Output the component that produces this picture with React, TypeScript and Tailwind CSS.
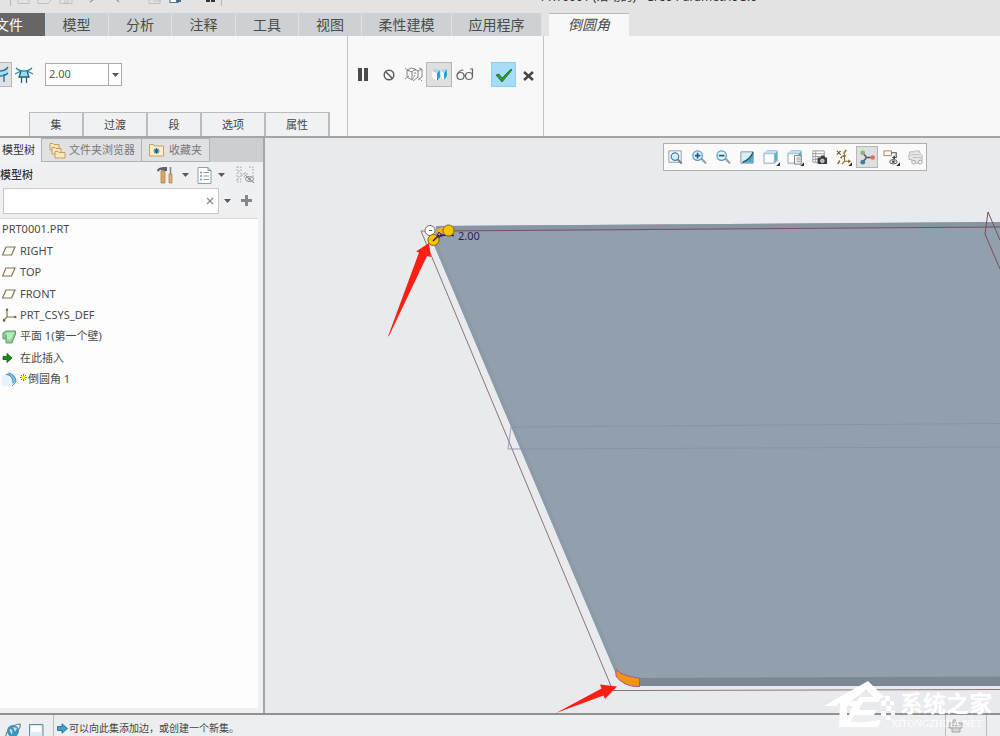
import { useState, type ReactNode } from "react";
import clsx from "clsx";

const ribbonTabs = [
  { label: "模型", width: "w-[64px]" },
  { label: "分析", width: "w-[63px]" },
  { label: "注释", width: "w-[64px]" },
  { label: "工具", width: "w-[63px]" },
  { label: "视图", width: "w-[63px]" },
  { label: "柔性建模", width: "w-[90px]" },
  { label: "应用程序", width: "w-[90px]" },
];

const optionTabs = [
  { label: "集", width: "w-[55px]" },
  { label: "过渡", width: "w-[64px]" },
  { label: "段", width: "w-[54px]" },
  { label: "选项", width: "w-[64px]" },
  { label: "属性", width: "w-[64px]" },
];

const Caret = () => (
  <svg width="7" height="4" viewBox="0 0 7 4">
    <path d="M0 0h7L3.5 4z" fill="#5a5a5a" />
  </svg>
);

const PlaneIcon = () => (
  <svg width="14" height="10" viewBox="0 0 14 10" fill="#fffef6" stroke="#857253" strokeWidth="1.2">
    <path d="M4 1h9l-3.500 8h-9z" />
  </svg>
);

const CsysIcon = () => (
  <svg width="16" height="16" viewBox="0 0 16 16" fill="none" stroke="#857253" strokeWidth="1.2">
    <path d="M5 2v8h9M5 10l-4 4" />
    <path d="M3.500 3.500L5 1l1.500 2.500zM12.500 8.500L15 10l-2.500 1.500zM1 11.500v3h3" fill="#6b4d3a" stroke="none" />
  </svg>
);

const WallIcon = () => (
  <svg width="14" height="14" viewBox="0 0 14 14">
    <path d="M4 1h9.500v3L10 13H4V9H1V3z" fill="#8fd39a" stroke="#5b9a68" strokeWidth="1" />
    <path d="M4.500 2.500H12L9 9.500H5z" fill="#b6ebbc" />
    <path d="M4 5v4" stroke="#5b9a68" />
  </svg>
);

const InsertIcon = () => (
  <svg width="11" height="12" viewBox="0 0 11 12">
    <path d="M1 4.500h4V1.500L10 6l-5 4.500v-3H1z" fill="#1d8a1d" stroke="#0d560d" strokeWidth=".8" />
  </svg>
);

const RoundIcon = () => (
  <svg width="15" height="15" viewBox="0 0 15 15">
    <path d="M0 3l6-2c5 1 8 4 8 9l-4 4H0z" fill="#e8f4fb" />
    <path d="M4 2.500c4 0 7 3 7 9l3-2C14 5 11 2 6.500 1z" fill="#7cc4ea" />
    <path d="M4 2.500c4 0 7 3 7 9M6.500 1C11 2 14 5 14 10l-4 4" fill="none" stroke="#4b7fa1" strokeWidth=".9" />
  </svg>
);

const treeItems: { label: string; icon?: ReactNode; fresh?: boolean }[] = [
  { label: "PRT0001.PRT" },
  { label: "RIGHT", icon: <PlaneIcon /> },
  { label: "TOP", icon: <PlaneIcon /> },
  { label: "FRONT", icon: <PlaneIcon /> },
  { label: "PRT_CSYS_DEF", icon: <CsysIcon /> },
  { label: "平面 1(第一个壁)", icon: <WallIcon /> },
  { label: "在此插入", icon: <InsertIcon /> },
  { label: "倒圆角 1", icon: <RoundIcon />, fresh: true },
];

const cube = (
  <>
    <path d="M1 5l3-3h11v10l-3 3H1z" fill="#fbfdfe" stroke="#7e9cab" strokeWidth=".9" />
    <path d="M12 5l3-3v10l-3 3z" fill="#58b2d6" />
    <path d="M1 5l3-3h11l-3 3z" fill="#bde2f1" />
    <path d="M1 5h11v10" fill="none" stroke="#8fa7b3" strokeWidth=".7" />
  </>
);

const corner = <path d="M18 14v4h-4z" fill="#333" />;

const viewTools: { name: string; icon: ReactNode; active?: boolean }[] = [
  {
    name: "重新调整",
    icon: (
      <>
        <path d="M2 2h13v12H2z" fill="#fff" stroke="#8d969b" />
        <circle cx="8.500" cy="8" r="4" fill="#d4eefa" stroke="#3b83b0" strokeWidth="1.300" />
        <path d="M11.500 11l4 4.500" stroke="#7a7a7a" strokeWidth="2" />
      </>
    ),
  },
  {
    name: "放大",
    icon: (
      <>
        <path d="M11 10l5 5.500" stroke="#9a9fa2" strokeWidth="2.200" />
        <circle cx="7" cy="7" r="5" fill="#e1f4fc" stroke="#5b9bc0" strokeWidth="1.300" />
        <path d="M7 4v6M4 7h6" stroke="#1d5c8a" strokeWidth="1.800" />
      </>
    ),
  },
  {
    name: "缩小",
    icon: (
      <>
        <path d="M11 10l5 5.500" stroke="#9a9fa2" strokeWidth="2.200" />
        <circle cx="7" cy="7" r="5" fill="#e1f4fc" stroke="#5b9bc0" strokeWidth="1.300" />
        <path d="M4 7h6" stroke="#1d5c8a" strokeWidth="1.800" />
      </>
    ),
  },
  {
    name: "重画",
    icon: (
      <>
        <path d="M2 3h13v12H2z" fill="#d9eef6" stroke="#7d98a5" />
        <path d="M15 3.500v11H3C9 12 12 9 15 3.500z" fill="#54a9ca" />
        <path d="M15 3.500C13 8 9 12 4 14" fill="none" stroke="#2a5368" strokeWidth="1.500" />
      </>
    ),
  },
  { name: "显示样式", icon: <>{cube}{corner}</> },
  {
    name: "已保存方向",
    icon: (
      <>
        {cube}
        <path d="M8 7h7v9H8z" fill="#fff" stroke="#777" />
        <path d="M10 9.500h4M10 11.500h4M10 13.500h4" stroke="#777" strokeWidth=".8" />
        {corner}
      </>
    ),
  },
  {
    name: "视图管理器",
    icon: (
      <>
        <path d="M2 2h12v12H2zM2 5h12M2 8h12M2 11h8M5 2v12" fill="#fff" stroke="#9a9a9a" />
        <path d="M7 9h3l1-2h3l1 2h2v7H7z" fill="#3c3c3c" />
        <circle cx="12" cy="12.500" r="2" fill="#9fb6c2" stroke="#fff" strokeWidth=".6" />
      </>
    ),
  },
  {
    name: "基准显示过滤器",
    icon: (
      <>
        <path d="M2 2l4 4M6 2L2 6" stroke="#6f5b35" strokeWidth="1.300" />
        <path d="M12 1l-3 4M8 7l-2 3M5 12l-2 4" stroke="#8d6f2f" strokeWidth="1.600" />
        <path d="M10 7v6h5M10 13l-3 3M8.500 8L10 6l1.500 2M14 11.500l2 1.500-2 1.500" fill="none" stroke="#8d6f2f" strokeWidth="1.200" />
        {corner}
      </>
    ),
  },
  {
    name: "旋转中心",
    active: true,
    icon: (
      <>
        <path d="M4 4l4 5h6M8 9l-4 5" fill="none" stroke="#4d5a5f" strokeWidth="1.500" />
        <circle cx="4" cy="4" r="2.500" fill="#7fb77c" />
        <circle cx="14.500" cy="9" r="2.500" fill="#d97568" />
        <circle cx="4" cy="14" r="2.500" fill="#3f7d9c" />
      </>
    ),
  },
  {
    name: "注释显示",
    icon: (
      <>
        <path d="M1 2h8v5H1z" fill="#fffdf3" stroke="#9c8557" />
        <path d="M9 4h5v5h-3" stroke="#555" strokeWidth="1.200" />
        <path d="M12.500 6.500v5L9.500 9z" fill="#444" />
        <ellipse cx="11" cy="13.500" rx="4" ry="2.300" fill="#dfe5e8" stroke="#555" />
        <circle cx="11" cy="13.500" r="1.400" fill="#444" />
        {corner}
      </>
    ),
  },
  {
    name: "动画选项",
    icon: (
      <>
        <path d="M3 3h5l1-1h4l1 3 2 2v6h-3v2H9v-2H5v-2H2V6z" fill="#e6e6e6" stroke="#b4b4b4" />
        <path d="M4 6h9M6 9h9" stroke="#bdbdbd" />
        <circle cx="7" cy="14" r="2" fill="#f4f4f4" stroke="#a9a9a9" />
        <circle cx="14" cy="14" r="2" fill="#f4f4f4" stroke="#a9a9a9" />
      </>
    ),
  },
];

const TitleStrip = () => (
  <header className="flex h-3 shrink-0 items-start justify-between overflow-hidden bg-[#e3e3e3]">
    <svg width="230" height="7" viewBox="0 0 230 7" className="shrink-0" fill="none">
      <path d="M10.500 0v6M221.500 0v6" stroke="#b5b5b5" />
      <path d="M18 0v3.500h11V0M38 0v3.500h10l3-3.500M60 0v3.500h12V0M65 0v3h3V0M149 0v3.500h11V0M153 1h8" stroke="#c0c0c0" />
      <path d="M90 2l4-3M119 2l-3-3" stroke="#999" strokeWidth="1.300" />
      <path d="M170 0v2.500h8V0" stroke="#4a7d95" fill="#fff" strokeWidth="1.200" />
      <path d="M176 1h5" stroke="#1d5068" strokeWidth="1.500" />
      <path d="M206 1h4M211 1h4" stroke="#333" strokeWidth="2" />
    </svg>
    <div className="flex h-1 flex-1 items-end justify-center pl-[68px] text-[12px] leading-[14px] text-[#333]">
      <h1 className="whitespace-nowrap">PRT0001 (活动的) - Creo Parametric 3.0</h1>
    </div>
  </header>
);

const RibbonTabs = () => (
  <nav className="flex h-6 shrink-0 bg-[#e3e3e3] pt-px text-[14px] leading-[22px] text-[#4b4b4b]">
    <button className="w-[45px] shrink-0 bg-[#666] pr-[22px] text-white">
      <span className="flex justify-end whitespace-nowrap">文件</span>
    </button>
    {ribbonTabs.map((tab) => (
      <button
        key={tab.label}
        className={clsx("shrink-0 whitespace-nowrap border-r border-[#dee0e1] bg-[#cdd1d3] hover:bg-[#d9dcde]", tab.width)}
      >
        {tab.label}
      </button>
    ))}
    <button className="ml-[7px] w-[80px] shrink-0 border-t border-[#b9b9b9] bg-[#f8f8f8] leading-[20px] italic">
      倒圆角
    </button>
  </nav>
);

const Dashboard = () => {
  const [radius, setRadius] = useState("2.00");

  return (
    <section className="flex h-[102px] shrink-0 border-b-2 border-[#a3a5a6] bg-[#f8f8f8]">
      <div className="flex w-[348px] shrink-0 flex-col justify-between border-r border-[#c4c4c4] pt-[26px]">
        <div className="flex items-center">
          <button aria-label="集模式" className="h-[25px] w-3 overflow-hidden border border-l-0 border-[#b5b7b9] bg-[#dfe1e2]">
            <svg width="11" height="18" viewBox="0 0 11 18" fill="none">
              <path d="M0 6l3-2 5-1v5L4 10H0z" fill="#a6e0f7" />
              <path d="M0 5c3 0 6-1 8-4M0 10c3 0 6-1 8-3M4 16V8" stroke="#2c7797" strokeWidth="1.400" />
            </svg>
          </button>
          <button aria-label="过渡模式" className="ml-[3px]">
            <svg width="18" height="18" viewBox="0 0 18 18" fill="none">
              <path d="M5 5h8l1 6H4z" fill="#9bdcf5" />
              <path d="M1 2c4 4 12 4 16 0M0 8l5-2.500M18 8l-5-2.500" stroke="#3488aa" strokeWidth="1.300" />
              <path d="M6 5l-2 6h10l-2-6M6.500 11v6M11.500 11v6" stroke="#285f78" strokeWidth="1.300" />
            </svg>
          </button>
          <div className="ml-3 flex h-[23px] w-[77px] border border-[#ababab] bg-white">
            <input
              aria-label="半径"
              value={radius}
              onChange={(e) => setRadius(e.target.value)}
              className="w-[62px] min-w-0 pl-[3px] text-[11px] text-[#555] outline-none"
            />
            <button aria-label="半径列表" className="flex flex-1 items-center justify-center border-l border-[#ababab]">
              <Caret />
            </button>
          </div>
        </div>
        <div className="ml-[29px] flex h-6 text-[11px] leading-[22px] text-[#444]">
          {optionTabs.map((tab) => (
            <button
              key={tab.label}
              className={clsx("border-t border-r-2 border-[#b9bbbc] bg-[#f0f1f3] first:border-l hover:bg-white", tab.width)}
            >
              {tab.label}
            </button>
          ))}
        </div>
      </div>

      <div className="flex w-[196px] shrink-0 items-start border-r border-[#c4c4c4] pt-[26px] pl-[3px]">
        <button aria-label="暂停" className="flex h-[25px] w-[25px] items-center justify-center">
          <svg width="11" height="13" viewBox="0 0 11 13">
            <path d="M0 0h4v13H0zM6 0h4v13H6z" fill="#4b4b4b" />
          </svg>
        </button>
        <button aria-label="无预览" className="flex h-[25px] w-[25px] items-center justify-center">
          <svg width="12" height="12" viewBox="0 0 12 12" fill="none" stroke="#5c5c5c" strokeWidth="1.500">
            <circle cx="6" cy="6" r="4.800" />
            <path d="M2.500 2.500l7 7" />
          </svg>
        </button>
        <button aria-label="分离" className="flex h-[25px] w-[25px] items-center justify-center">
          <svg width="18" height="15" viewBox="0 0 18 15" fill="none" stroke="#7a7a7a" strokeWidth=".9">
            <path d="M2 3l5 2v8l-5-3zM7 5l3-3 3 2v6l-5 4M13 4l4-2v8l-4 3M2 3l4-2 4 1" />
            <path d="M0 1l4 3M0 12l4-3M17 14l-4-4M10 2v6l-3 5M14 1l3 1" strokeDasharray="2 1" />
          </svg>
        </button>
        <button aria-label="连接" className="flex h-[25px] w-[26px] items-center justify-center border border-[#b5b7b9] bg-[#dddfe1]">
          <svg width="17" height="14" viewBox="0 0 17 14">
            <path d="M1 3l5 2v8l-5-4z" fill="#fff" />
            <path d="M6 5l3-3v7l-3 4z" fill="#2f9fd0" />
            <path d="M1 3l4-2 4 1-3 3z" fill="#9bdcf5" />
            <path d="M10 3l3 2v7l-3-3z" fill="#fff" />
            <path d="M13 5l3-4v7l-3 4z" fill="#2f9fd0" />
            <path d="M10 3l2-2h4l-3 4z" fill="#9bdcf5" />
          </svg>
        </button>
        <button aria-label="预览" className="flex h-[25px] w-[25px] items-center justify-center">
          <svg width="18" height="13" viewBox="0 0 18 13" fill="none" stroke="#666" strokeWidth="1.200">
            <circle cx="4.500" cy="8" r="3.500" />
            <circle cx="13" cy="8" r="3.500" />
            <path d="M1 7.500C2 4 4 2 7.500 2M8 8c.5-1 1-1 1.500 0M16.500 8V1h-2.500" />
          </svg>
        </button>
        <button aria-label="确定" className="ml-[14px] flex h-[25px] w-[25px] items-center justify-center border border-[#8fd0f0] bg-[#a5ddfb]">
          <svg width="18" height="14" viewBox="0 0 18 14">
            <path d="M1 7l3-1 3 4 9-9 1 1-10 12z" fill="#2f9a33" stroke="#1f6e25" strokeWidth=".8" />
          </svg>
        </button>
        <button aria-label="取消" className="flex h-[27px] w-[25px] items-center justify-center">
          <svg width="11" height="10" viewBox="0 0 11 10">
            <path d="M1 1l9 8M10 1L1 9" stroke="#444" strokeWidth="2.400" />
          </svg>
        </button>
      </div>
    </section>
  );
};

const FolderIcon = () => (
  <svg width="17" height="17" viewBox="0 0 17 17" fill="#fbe6b4" stroke="#c0a06a">
    <path d="M1 8V1.500h3l1 1h5V8z" />
    <path d="M3 12V5.500h3l1 1h5V12z" />
    <path d="M6 16V9.500h3l1 1h6V16z" />
  </svg>
);

const ModelTree = () => {
  const [query, setQuery] = useState("");

  return (
    <aside className="flex w-[265px] shrink-0 flex-col border-r-2 border-[#a3a5a6] bg-[#eff0f2]">
      <div className="flex h-6 shrink-0 bg-[#cccecf] text-[11px] text-[#777]">
        <button className="w-[41px] shrink-0 bg-[#f1f2f4] pl-[2px] text-left text-[#333]">模型树</button>
        <button className="flex w-[101px] shrink-0 items-center gap-[3px] border border-[#b0b2b3] bg-[#dfe1e2] pl-[7px] whitespace-nowrap">
          <FolderIcon />
          文件夹浏览器
        </button>
        <button className="flex w-[68px] shrink-0 items-center gap-[5px] border border-l-0 border-[#b0b2b3] bg-[#dfe1e2] pl-[7px] whitespace-nowrap">
          <svg width="15" height="14" viewBox="0 0 15 14">
            <path d="M.5 13V1.500h4l1 1.500h9v10z" fill="#fdf0c9" stroke="#c0a06a" />
            <path d="M7.500 5v6M4.500 8h6M5.500 6l4 4M9.500 6l-4 4" stroke="#1f6f93" strokeWidth="1.100" />
          </svg>
          收藏夹
        </button>
      </div>

      <div className="flex h-[26px] shrink-0 items-center text-[#333]">
        <h2 className="w-[157px] text-[11px] font-medium">模型树</h2>
        <button aria-label="设置" className="flex items-center gap-[6px]">
          <svg width="19" height="18" viewBox="0 0 19 18">
            <path d="M0 4c2-3 5-3 10-3v4H8L3 4 1 6z" fill="#5d6468" />
            <path d="M4 5h4v12H4z" fill="#d9a867" stroke="#a37a45" strokeWidth=".7" />
            <path d="M13.500 1v7" stroke="#7a8288" strokeWidth="1.500" />
            <path d="M12 8h3v9h-3z" fill="#e0b175" stroke="#a37a45" strokeWidth=".7" />
          </svg>
          <Caret />
        </button>
        <button aria-label="显示" className="ml-2 flex items-center gap-[6px]">
          <svg width="15" height="17" viewBox="0 0 15 17" fill="none">
            <path d="M1 .5h10l3 3v13H1z" fill="#fff" stroke="#8d9ea7" />
            <path d="M11 .5v3h3" stroke="#7d8f99" />
            <path d="M3 5.500h2M3 9h2M3 12.500h2" stroke="#6a9cb4" strokeWidth="1.500" />
            <path d="M6.500 5.500H12M6.500 9H12M6.500 12.500H12" stroke="#8b979d" />
          </svg>
          <Caret />
        </button>
        <button aria-label="选择过滤" className="ml-[11px]">
          <svg width="19" height="18" viewBox="0 0 19 18" fill="none" stroke="#b0b0b0">
            <path d="M1 1h4v4H1zM1 7h4v4H1zM1 13h4v3H1zM8 7h3v4H8zM5 9h3M13 1h4v10" strokeDasharray="2 1" />
            <ellipse cx="13.500" cy="13" rx="4" ry="2.500" stroke="#8c8c8c" />
            <circle cx="13.500" cy="13" r="1.200" fill="#888" />
            <path d="M9 9l9 8" stroke="#888" />
          </svg>
        </button>
      </div>

      <div className="flex h-[30px] shrink-0 items-start pl-[3px]">
        <div className="flex h-[26px] w-[216px] items-center border border-[#c6c8ca] bg-white">
          <input
            aria-label="搜索模型树"
            value={query}
            onChange={(e) => setQuery(e.target.value)}
            className="min-w-0 flex-1 px-1 text-[11px] outline-none"
          />
          <button aria-label="清除" onClick={() => setQuery("")} className="px-1">
            <svg width="8" height="8" viewBox="0 0 8 8">
              <path d="M1 1l6 6M7 1L1 7" stroke="#8a8a8a" strokeWidth="1.200" />
            </svg>
          </button>
        </div>
        <button aria-label="搜索选项" className="flex h-[25px] items-center pl-[5px]">
          <Caret />
        </button>
        <button aria-label="添加" className="flex h-[25px] items-center pl-[10px]">
          <svg width="11" height="11" viewBox="0 0 11 11">
            <path d="M4 0h3v4h4v3H7v4H4V7H0V4h4z" fill="#878787" />
          </svg>
        </button>
      </div>

      <div className="mr-[5px] mb-[5px] flex-1 border-t border-[#d9dbdd] bg-[#fdfdfe]">
        <ul className="flex h-[171px] flex-col text-[11px] text-[#4b4b4b]">
          {treeItems.map((item) => (
            <li key={item.label} className="flex flex-1 items-center pl-[2px] whitespace-nowrap">
              {item.icon && <span className="flex w-[18px] shrink-0 items-center">{item.icon}</span>}
              {item.fresh && (
                <svg width="8" height="12" viewBox="0 0 8 12">
                  <path d="M3.500 1v7M0 4.500h7M1 2l5 5M6 2L1 7" stroke="#8a7a10" />
                  <circle cx="3.500" cy="4.500" r="1.800" fill="#fff200" />
                </svg>
              )}
              {item.label}
            </li>
          ))}
        </ul>
      </div>
    </aside>
  );
};

const ModelView = () => (
  <svg viewBox="265 138 735 575" preserveAspectRatio="xMinYMin slice" className="block h-full w-full" fill="none">
    {/* sheet wall */}
    <path d="M436 226L1000 222V686H640L616 674L434 245z" fill="#929fac" />
    <path d="M436 226L1000 222V227L436 231z" fill="#8895a3" />
    <path d="M434 245L616 674L619 672L437 243z" fill="#8d9aa8" />
    <path d="M638 678L1000 676.500V686H638z" fill="#7b8894" />

    {/* bounding edges */}
    <path d="M1000 227L440 231" stroke="#794f5d" />
    <path d="M428 231h-7L611 686M613 690.500H640L1000 689.500" stroke="#8b7479" />
    <path d="M1000 240L988 212L985 234L1000 269" stroke="#74525c" />
    <path d="M1000 423.500L511 427L508 449L1000 447" stroke="#87929f" strokeWidth=".8" />

    {/* round preview and its drag handles */}
    <path d="M616 669.500C622 675 630 677 639.500 678V686.500C628 687 620 682 616 676z" fill="#ef9712" stroke="#b34fa2" />
    <path d="M434 232C438 227 444 227 448 227V234z" fill="#f2ab28" />
    <path d="M436 241L441 235L454 235.500" stroke="#34165a" strokeWidth="1.500" />
    <path d="M436 237l3-5 4 4z" stroke="#4d2a72" />
    <circle cx="430" cy="230.500" r="5" fill="#fff" stroke="#6a6a6a" />
    <path d="M429 230.500h3" stroke="#555" />
    <circle cx="448.500" cy="230.500" r="5.500" fill="#fcc400" stroke="#81660d" />
    <circle cx="433.500" cy="240" r="5.500" fill="#fcc400" stroke="#81660d" />
    <path d="M433 241l6-6" stroke="#2b1748" strokeWidth="1.500" />
    <text x="458" y="240" fill="#33195a" fontSize="11">2.00</text>

    <path d="M388 336.500L419 252.500L416 251.500L429 243L431 257L427 256L389 336z" fill="#fb2013" />
    <path d="M556 713L601.500 688.500L600 684.500L617 686.500L605 699L603.500 695.500z" fill="#fb2013" />
  </svg>
);

const ViewToolbar = () => (
  <div className="absolute top-[5px] right-[73px] flex h-7 items-center gap-1 border border-[#adafb1] bg-[#fafafa] px-px">
    {viewTools.map((tool) => (
      <button
        key={tool.name}
        aria-label={tool.name}
        className={clsx(
          "flex h-5 w-5 items-center justify-center",
          tool.active && "bg-[#dddfe0] outline outline-[#b5b5b5]"
        )}
      >
        <svg width="17" height="17" viewBox="0 0 18 18" fill="none">
          {tool.icon}
        </svg>
      </button>
    ))}
  </div>
);

const StatusBar = () => (
  <footer className="flex h-[23px] shrink-0 items-start border-t-2 border-[#8f9193] bg-[#edeef0] text-[10px] text-[#444]">
    <div className="flex h-full items-start pt-2 pl-[5px]">
      <svg width="16" height="16" viewBox="0 0 16 16">
        <circle cx="8" cy="8" r="6" fill="#3c93c0" />
        <path d="M4 6c3-1 4 2 3 6M8 4l4 1-2 4z" fill="#bfe6f6" />
        <path d="M1 14C0 9 8 1 15 1c1 3-1 5-2 6" fill="none" stroke="#6d8490" strokeWidth="1.200" />
      </svg>
      <svg width="15" height="16" viewBox="0 0 15 16" className="ml-2">
        <path d="M.5 1.500h13.500v14H.5z" fill="#dcebf4" stroke="#66889b" />
        <path d="M2 3h10v6H2z" fill="#fff" />
      </svg>
    </div>
    <p className="ml-[9px] flex h-full items-center gap-px border-l border-[#b9bbbc] pt-[6px] pl-[3px] whitespace-nowrap">
      <svg width="11" height="11" viewBox="0 0 11 11">
        <path d="M.5 3.500H5V.8l5.500 4.700L5 10.200V7.500H.5z" fill="#3fa3c9" stroke="#205f7c" strokeWidth=".8" />
      </svg>
      可以向此集添加边，或创建一个新集。
    </p>
    <div className="mr-[13px] ml-auto flex h-full w-[42px] items-end border-x border-[#b9bbbc] pl-[2px]">
      <svg width="15" height="18" viewBox="0 0 15 18">
        <path d="M1 5h4V2h3v3h6v5h-2v4H4v-4H1z" fill="#d6d6d6" stroke="#a3a3a3" />
        <path d="M3 7.500h9M4 10h8" stroke="#b0b0b0" />
      </svg>
    </div>
  </footer>
);

const Watermark = () => (
  <div className="pointer-events-none absolute right-0 bottom-0">
    <svg width="180" height="60" viewBox="820 676 180 60">
      <path d="M824 706L868 681L884 697L877 700L866 690L846 705L840 702L837 706z" fill="#fff" />
      <path d="M840 701h17l-1 5h-9v16h20l14-2-3 7H839z" fill="#fff" />
      <path d="M860 697h22l-4 5h-15l-4 8h18l-3 5h-20l-4 9h-4l5-15z" fill="#fff" />
      <path
        d="M885 696h5v5h-5zM881 701h5v5h-5zM890 701h4v4h-4zM886 706h5v5h-5zM881 711h5v5h-5zM891 711h4v4h-4zM886 716h4v4h-4z"
        fill="#fff"
      />
      <text x="900" y="712" fill="#fff" fontSize="23" fontWeight="700">系统之家</text>
      <text x="891" y="727" fill="#fff" fontSize="10" fontFamily="Liberation Serif, serif">XITONGZHIJIA.NET</text>
    </svg>
  </div>
);

const App = () => (
  <div className="relative flex h-screen flex-col overflow-hidden bg-[#e9eaee] font-['Noto_Sans','Noto_Sans_CJK_SC',sans-serif]">
    <TitleStrip />
    <RibbonTabs />
    <Dashboard />
    <main className="flex min-h-0 flex-1">
      <ModelTree />
      <div className="relative min-w-0 flex-1 overflow-hidden">
        <ModelView />
        <ViewToolbar />
      </div>
    </main>
    <StatusBar />
    <Watermark />
  </div>
);

export default App;
